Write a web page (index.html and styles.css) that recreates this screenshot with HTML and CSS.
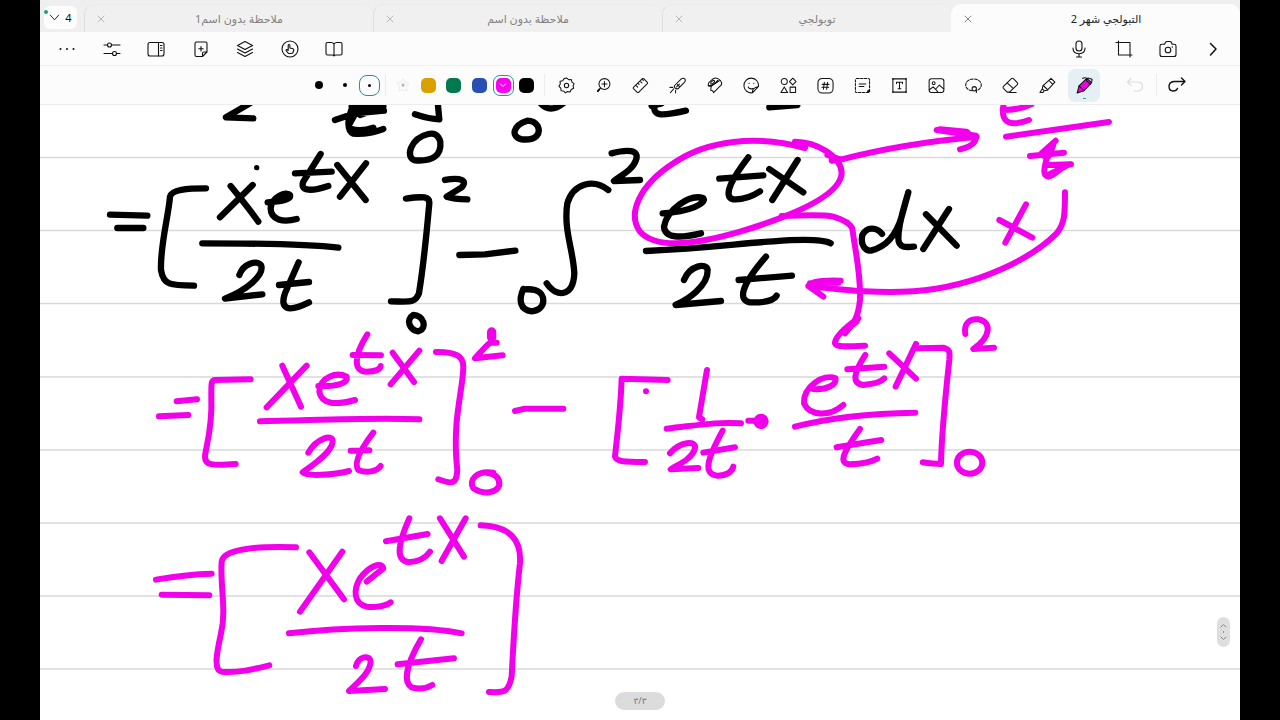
FILE: index.html
```html
<!DOCTYPE html>
<html lang="ar">
<head>
<meta charset="utf-8">
<meta name="viewport" content="width=device-width, initial-scale=1">
<title>التبولجي شهر 2</title>
<link rel="stylesheet" href="styles.css">
</head>
<body>
<div class="app">
  <nav class="tabs" aria-label="Notes">
    <button class="tab-count" type="button"><svg class="chevron" viewBox="0 0 12 12"><path d="M1.500 3.500L6 8.500L10.500 3.500"/></svg><span>4</span></button>
    <div class="tab"><button class="close" type="button" aria-label="Close"><svg viewBox="0 0 8 8"><path d="M1 1L7 7M7 1L1 7"/></svg></button><button class="tab-name" type="button" dir="rtl">ملاحظة بدون اسم1</button></div>
    <div class="tab"><button class="close" type="button" aria-label="Close"><svg viewBox="0 0 8 8"><path d="M1 1L7 7M7 1L1 7"/></svg></button><button class="tab-name" type="button" dir="rtl">ملاحظة بدون اسم</button></div>
    <div class="tab"><button class="close" type="button" aria-label="Close"><svg viewBox="0 0 8 8"><path d="M1 1L7 7M7 1L1 7"/></svg></button><button class="tab-name" type="button" dir="rtl">توبولجي</button></div>
    <div class="tab active"><button class="close" type="button" aria-label="Close"><svg viewBox="0 0 8 8"><path d="M1 1L7 7M7 1L1 7"/></svg></button><button class="tab-name" type="button" dir="rtl">التبولجي شهر 2</button></div>
  </nav>

  <header class="actions">
    <div class="group view-group">
      <button class="icon" type="button" aria-label="More"><svg viewBox="0 0 18 18"><g class="solid"><circle cx="2.500" cy="9" r="1"/><circle cx="9" cy="9" r="1"/><circle cx="15.500" cy="9" r="1"/></g></svg></button>
      <button class="icon" type="button" aria-label="Settings"><svg viewBox="0 0 18 18"><path d="M1 5H4.500M8.500 5H17M1 13.500H9.500M13.500 13.500H17"/><circle cx="6.500" cy="5" r="2"/><circle cx="11.500" cy="13.500" r="2"/></svg></button>
      <button class="icon" type="button" aria-label="Side panel"><svg viewBox="0 0 18 18"><rect x="1" y="2.500" width="16" height="13.500" rx="2"/><path d="M11.500 2.500V16M13.500 5.500H15M13.500 8H15M13.500 10.500H15"/></svg></button>
      <button class="icon" type="button" aria-label="Add page"><svg viewBox="0 0 18 18"><path d="M10.500 16.500H4.500Q3 16.500 3 15V3.500Q3 2 4.500 2H13.500Q15 2 15 3.500V12L10.500 16.500V13.500Q10.500 12 12 12H15M9 6.500V11M6.800 8.700H11.200"/></svg></button>
      <button class="icon" type="button" aria-label="Layers"><svg viewBox="0 0 18 18"><path d="M9 1.500L16.500 5.500L9 9.500L1.500 5.500ZM1.500 9L9 13L16.500 9M1.500 12.500L9 16.500L16.500 12.500"/></svg></button>
      <button class="icon" type="button" aria-label="Touch mode"><svg viewBox="0 0 18 18"><circle cx="9" cy="9" r="8"/><path d="M7.200 10V5.500Q7.300 4.500 8 4.500Q8.900 4.500 8.900 5.500V8L12 8.700Q13 9 12.800 10L12 12.500Q11.500 13.500 10 13.500H8.500Q7.700 13.500 7 12.800L5 10.500Q5 9.200 6.200 9.500L7.200 10.500"/></svg></button>
      <button class="icon" type="button" aria-label="Reading view"><svg viewBox="0 0 18 18"><path d="M9 4Q8 2.500 6 2.500H2.500Q1 2.500 1 4V13.500Q1 15 2.500 15H7Q8.500 15 9 16Q9.500 15 11 15H15.500Q17 15 17 13.500V4Q17 2.500 15.500 2.500H12Q10 2.500 9 4V15.500"/></svg></button>
    </div>
    <div class="group capture-group">
      <button class="icon" type="button" aria-label="Record"><svg viewBox="0 0 18 18"><rect x="6" y="1" width="6" height="10" rx="3"/><path d="M3 8V8.500Q3.200 13.500 9 13.800Q14.800 13.500 15 8.500V8M9 14V17M6.500 17H11.500"/></svg></button>
      <button class="icon" type="button" aria-label="Crop"><svg viewBox="0 0 18 18"><path d="M3.500 1V15H17M1 2.500H15V17" stroke-dasharray="3 .8"/></svg></button>
      <button class="icon" type="button" aria-label="Camera"><svg viewBox="0 0 18 18"><path d="M5.500 4.200L6.500 2.200Q7 1.500 8 1.500H11Q12 1.500 12.300 2.200L13.200 4.200H15Q17 4.200 17 6V14.500Q17 16.500 15 16.500H3Q1 16.500 1 14.500V6Q1 4.200 3 4.200Z"/><circle cx="9" cy="10" r="2.800"/><circle class="solid" cx="13.300" cy="7" r=".7"/></svg></button>
      <button class="icon" type="button" aria-label="Next"><svg viewBox="0 0 18 18"><path stroke-width="1.500" d="M6.500 3.500L12 9L6.500 15"/></svg></button>
    </div>
  </header>

  <div class="pens" role="toolbar" aria-label="Drawing tools">
    <div class="group size-group">
      <button class="icon" type="button" aria-label="Thick"><span class="dot large"></span></button>
      <button class="icon" type="button" aria-label="Medium"><span class="dot medium"></span></button>
      <button class="icon size-on" type="button" aria-label="Thin"><span class="dot"></span></button>
    </div>
    <span class="rule"></span>
    <div class="group colour-group">
      <button class="icon faint" type="button" aria-label="Add colour"><svg viewBox="0 0 18 18"><path class="star" d="M9 3L11 6L15 7L12.500 10.500L13 15L9 13.500L5 15L5.500 10.500L3 7L7 6Z"/><path d="M9 7.500V10.500M7.500 9H10.500"/></svg></button>
      <button class="icon" type="button" aria-label="Gold"><span class="swatch gold"></span></button>
      <button class="icon" type="button" aria-label="Green"><span class="swatch green"></span></button>
      <button class="icon" type="button" aria-label="Blue"><span class="swatch blue"></span></button>
      <button class="icon colour-on" type="button" aria-label="Magenta"><span class="swatch magenta"><svg viewBox="0 0 8 8"><path d="M1.500 3L4 5.500L6.500 3"/></svg></span></button>
      <button class="icon" type="button" aria-label="Black"><span class="swatch black"></span></button>
    </div>
    <span class="rule"></span>
    <div class="group tool-group">
      <button class="icon tool" type="button" aria-label="Tool settings"><svg viewBox="0 0 18 18"><path d="M9 1L11.200 2.800L14 2.600L14.800 5.400L17 7L16 9.300L16.600 12L14 13.200L12.800 15.800L10 15.300L7.800 16.800L6 14.800L3.200 14.500L3 11.700L1 9.800L2.400 7.400L2.200 4.600L5 4L6.500 1.700Z"/><circle cx="9" cy="9" r="2.300"/></svg></button>
      <button class="icon tool" type="button" aria-label="Zoom"><svg viewBox="0 0 18 18"><circle cx="10" cy="7.500" r="5.800"/><path d="M10 4.800V10.200M7.300 7.500H12.700M5.900 11.600L2.800 15.200"/><path stroke-width="2" d="M4.600 13.200L3 15"/></svg></button>
      <button class="icon tool" type="button" aria-label="Ruler"><svg viewBox="0 0 18 18"><path d="M1.500 11L11 1.800Q11.700 1.200 12.400 1.800L16.200 5.600Q16.800 6.300 16.200 7L7 16.200Q6.300 16.800 5.600 16.200L1.500 12.300Q1 11.600 1.500 11ZM4 8.700L6 10.700M6.200 6.500L7.500 7.800M8.500 4.300L10.500 6.300M10.600 2.200L12 3.600"/></svg></button>
      <button class="icon tool" type="button" aria-label="Laser pointer"><svg viewBox="0 0 18 18"><path d="M6 9L13 2Q15 .5 16.700 2Q18 3.600 16.500 5.500L9.500 12.500Q7.500 12.800 6.300 11.500Q5.300 10.300 6 9ZM8 10.500L11 7.500M9 8Q9 9.500 11 9.700"/><path stroke-dasharray="1.500 1" d="M5 12.500L1.500 16.500M4 11H1M7 14V17"/></svg></button>
      <button class="icon tool" type="button" aria-label="Washi tape"><svg viewBox="0 0 18 18"><path d="M3 6L8 1.500Q10 .5 13 2Q16 3.500 16.500 6V8L8 16.500L7 14.500L5 14L5.500 10L2.500 9.500Q2 7.500 3 6ZM3 9Q7 9.500 12.500 3.500M5.500 10L14 4"/><ellipse cx="7" cy="5.500" rx="2.500" ry="1.200" transform="rotate(-38 7 5.500)"/></svg></button>
      <button class="icon tool" type="button" aria-label="Stickers"><svg viewBox="0 0 18 18"><path d="M16.500 10A7.800 7.800 0 1 0 10 16.700L16.500 10ZM10 16.700Q9.800 12.700 12.500 11.500Q14 10.700 16.500 10M5.500 10.500Q7 13.500 10.500 12.200"/><circle class="solid" cx="6.500" cy="6.800" r=".6"/><circle class="solid" cx="11.500" cy="6.800" r=".6"/></svg></button>
      <button class="icon tool" type="button" aria-label="Shapes"><svg viewBox="0 0 18 18"><circle cx="4.500" cy="4.800" r="3.200"/><path d="M13.500 1.300L17 4.800L13.500 8.300L10 4.800ZM4.500 10.500L8 16.500H1Z"/><rect x="10.700" y="10.700" width="5.800" height="5.800"/></svg></button>
      <button class="icon tool" type="button" aria-label="Tags"><svg viewBox="0 0 18 18"><rect x="1" y="1.500" width="16" height="15.500" rx="4.500"/><path d="M7.800 5.500L6.800 13M11.200 5.500L10.200 13M5.500 7.800H12.700M5.200 10.800H12.400"/></svg></button>
      <button class="icon tool" type="button" aria-label="Select text"><svg viewBox="0 0 18 18"><rect stroke-dasharray="2.500 1.500" x="1.500" y="1.500" width="15" height="15" rx="1.500"/><path d="M5.500 7.500H12.500M5.500 10H10.500"/><circle class="solid" cx="15.500" cy="15" r="1.500"/></svg></button>
      <button class="icon tool" type="button" aria-label="Text box"><svg viewBox="0 0 18 18"><rect x="2" y="2" width="14" height="14"/><path d="M5.800 7V5.500H12.200V7M9 5.500V12.500M7.500 12.500H10.500"/><path class="solid" d="M1.300 1.300h1.500v1.500h-1.500zM15.200 1.300h1.500v1.500h-1.500zM1.300 15.200h1.500v1.500h-1.500zM15.200 15.200h1.500v1.500h-1.500z"/></svg></button>
      <button class="icon tool" type="button" aria-label="Image"><svg viewBox="0 0 18 18"><rect x="1.200" y="1.800" width="15.600" height="14.500" rx="2.500"/><circle cx="6" cy="6.500" r="1.500"/><path d="M1.500 13.500L5.500 10.500L8 13L12 8.500L16.500 12.500M8 13L10.500 16"/></svg></button>
      <button class="icon tool" type="button" aria-label="Lasso"><svg viewBox="0 0 18 18"><path stroke-dasharray="3 1.500" d="M7.500 14.500C3 13.800.8 11.500.8 8.500C.8 4.700 4.500 2 9 2S17.200 4.700 17.200 8.500C17.200 11.200 15 13.600 12 14.300"/><circle cx="9.800" cy="12.500" r="2.300"/><path d="M11.500 14Q12.500 15.500 12 16.500"/></svg></button>
      <button class="icon tool" type="button" aria-label="Eraser"><svg viewBox="0 0 18 18"><path d="M1.500 10L10 1.800Q11 1 12 1.800L16.200 6Q17 7 16.200 8L8 16H5.500L1.500 12Q.8 11 1.500 10ZM5.500 6.200L12 12.200M8 16.500H15"/></svg></button>
      <button class="icon tool" type="button" aria-label="Highlighter"><svg viewBox="0 0 18 18"><path d="M4 9.500L12.800 1.500L16.800 5.500L9 14L5.500 14.500L3.500 12.500ZM3.500 12.500L1 16.500H4L5.500 14.500M4.500 9L9.200 13.500M10.500 3.700L14.600 7.800"/></svg></button>
      <button class="icon tool tool-on" type="button" aria-label="Pen"><svg viewBox="0 0 18 18"><path class="ink-fill" d="M3.200 9.500L11.500 1.500L16.500 6L8.500 14.500L1.200 17Z"/><path d="M10 2.800L15.200 7.500M3.200 9.500L8.500 14.500M7 1.500Q9 0 11.500 1.500M12.500 1L17 2.500L16.500 6"/></svg><span class="tick"></span></button>
    </div>
    <div class="group history-group">
      <button class="icon undo" type="button" aria-label="Undo" disabled><svg viewBox="0 0 18 18"><path d="M5 2.500L1.500 6L5 9.500M1.500 6H12Q16.500 6.500 16.500 10.500T12 15H8"/></svg></button>
      <span class="rule"></span>
      <button class="icon" type="button" aria-label="Redo"><svg viewBox="0 0 18 18"><path stroke-width="1.400" d="M13.500 2L17 5.500L13.500 9M17 5.500H6Q1 6 1 10.500Q1.200 15 5 15Q8.500 15 9.500 12.500"/></svg></button>
    </div>
  </div>

  <main class="page">
    <svg class="sheet" viewBox="40 105 1200 615" preserveAspectRatio="xMinYMin slice" role="img" aria-label="Handwritten integration by parts">
      <path class="ruling" d="M40 157.500H1240M40 230.500H1240M40 303.500H1240M40 377H1240M40 450H1240M40 523H1240M40 596H1240M40 669H1240"/>
      <!-- first term, black ink -->
      <g class="ink black-ink" transform="translate(100 100) scale(.3333)">
        <path d="M450 10L378 52L460 55"/>
        <path d="M765 5C742 50 738 90 760 101C800 104 825 95 850 87M705 60L765 40L852 32M750 85C775 95 800 90 820 83M780 15L750 70M820 10L780 45L850 20M755 20L850 15"/>
        <path d="M1013 5L1018 58Q990 58 945 43"/>
        <path d="M985 102C930 115 915 175 945 181C1000 185 1025 165 1021 125C1015 103 1000 98 985 102Z"/>
        <path d="M470 203h.1" stroke-width="16"/>
        <path d="M392 258C410 280 450 330 475 365M458 255L360 352"/>
        <path d="M503 307C540 305 575 300 570 285C560 272 515 290 512 325C512 360 550 368 590 357"/>
        <path d="M662 162L610 245C600 270 625 278 685 258M585 220L695 215"/>
        <path d="M712 195L797 300M798 190L720 290"/>
        <path d="M307 430C450 430 620 432 715 443"/>
        <path d="M418 525C430 490 470 480 483 495C495 525 440 570 375 596L487 583"/>
        <path d="M596 487L555 580C540 625 560 640 627 607M537 555L627 546"/>
        <path d="M318 265C260 265 215 268 210 290C205 350 180 440 183 510C190 555 210 557 282 557"/>
        <path d="M30 344L142 347M52 384H130"/>
        <path d="M918 296C970 288 990 290 988 310C980 400 970 500 957 580C945 610 930 605 873 604"/>
        <path d="M940 645C915 660 930 690 955 694C985 685 970 645 940 645Z"/>
      </g>
      <!-- second term, black ink -->
      <g class="ink black-ink" transform="translate(440 100) scale(.3333)">
        <path d="M262 62C220 75 210 110 245 118C290 122 303 100 293 78C285 65 270 62 262 62ZM300 8C320 32 345 30 370 10"/>
        <path d="M645 8C635 50 660 50 738 32M635 18L665 10M988 22L1072 15"/>
        <path d="M15 240C60 232 85 240 65 262L20 290Q40 297 82 298"/>
        <path d="M58 465L135 463L226 452"/>
        <path d="M505 270C460 235 400 250 382 310C370 390 400 450 403 520C400 590 350 595 320 550"/>
        <path d="M515 160C560 148 600 148 588 180C578 210 545 225 522 243L600 240"/>
        <path d="M250 567C235 600 240 630 275 634C320 630 320 580 285 570C265 565 255 570 250 567"/>
        <path d="M668 340C750 335 800 310 790 295C750 280 680 330 672 380C675 415 720 415 783 400"/>
        <path d="M925 172C880 230 845 290 880 298C910 300 935 290 960 274M838 236L970 226"/>
        <path d="M988 207L1090 277M1073 180L997 300"/>
        <path d="M618 453C800 445 900 430 1000 424C1080 418 1150 418 1172 430"/>
        <path d="M732 540C750 495 800 488 803 510C805 560 740 600 707 615L843 603"/>
        <path d="M978 470C900 560 895 600 930 607C960 608 1000 605 1010 587M896 540L1056 527"/>
      </g>
      <g class="ink black-ink" transform="translate(780 100) scale(.3333)">
        <path d="M306 402C290 380 260 380 247 405C240 440 260 455 275 451C320 440 350 400 365 350L385 277C370 330 355 370 355 415C355 445 380 442 402 440M438 343L530 437M507 327L430 447"/>
      </g>
      <!-- circled exponential with its arrows -->
      <g class="ink pink-ink" transform="translate(780 100) scale(.3333)">
        <path d="M75 144C-70 104 -220 120 -320 190C-420 255 -460 340 -420 395C-370 450 -240 430 -120 395C30 350 180 290 185 220C185 170 110 125 45 125L75 140M142 165L180 178"/>
        <path d="M5 348C80 345 140 345 160 350C200 362 212 375 217 385C225 450 243 520 240 600C235 650 220 675 195 700M235 655C200 680 165 710 165 730C170 742 200 740 255 737M230 665L192 695"/>
        <path d="M155 182L185 178C300 148 430 125 590 110M470 90L588 107C590 130 565 142 540 148M480 88L560 95L580 115"/>
        <path d="M672 8C660 60 680 85 747 60M668 30C700 30 730 25 755 12M678 110L987 66"/>
        <path d="M827 122L785 160L800 175C795 200 785 225 805 230C830 225 845 195 873 193L805 195M750 168L852 158M820 135L805 170M810 222L855 200"/>
        <path d="M658 360L757 413M738 313L676 428"/>
        <path d="M855 277C855 340 855 370 830 400C760 470 600 560 400 574C280 580 200 570 85 558M182 542C130 540 90 545 85 558L130 590M90 550L175 548M100 565L125 560"/>
        <path d="M556 702C550 670 570 655 595 658C635 665 635 710 580 747L642 743"/>
      </g>
      <!-- second line of working -->
      <g class="ink pink-ink" transform="translate(140 320) scale(.3333)">
        <path d="M57 289L145 285M110 244L171 238"/>
        <path d="M332 178L225 180C213 182 214 190 214 230C218 330 195 390 195 410C195 435 215 438 287 432"/>
        <path d="M427 137L483 260M500 137L380 262"/>
        <path d="M535 198C590 200 625 190 620 170C590 155 540 170 538 215C545 255 590 255 645 240"/>
        <path d="M682 43C640 110 640 155 680 155C700 155 720 150 722 138M638 105L723 106"/>
        <path d="M758 98L822 186M838 92L752 193M360 304C550 300 700 292 838 298"/>
        <path d="M505 398C530 355 580 340 578 365C575 400 510 440 488 457C500 470 580 465 627 453"/>
        <path d="M700 338C660 390 640 430 655 450C680 460 710 455 722 438M632 392L688 391"/>
        <path d="M888 96C950 95 970 110 970 140C970 210 935 300 952 450C950 490 940 495 895 478"/>
        <path d="M1055 36V52" stroke-width="28"/><path d="M1070 68H1050C1030 85 1015 105 1005 115L1088 106"/>
        <path d="M1060 458C1010 450 985 480 1000 505C1030 525 1070 520 1078 495C1080 470 1060 460 1040 458"/>
      </g>
      <g class="ink pink-ink" transform="translate(500 310) scale(.3333)">
        <path d="M45 303L75 296H190"/>
        <path d="M503 210L365 206C362 300 350 390 345 440C350 455 370 456 435 456M438 244h.1"/>
        <path d="M621 180L597 322L607 328M500 356C600 345 650 335 723 340"/>
        <path d="M510 430C540 395 590 390 585 415C575 450 530 465 512 478L595 474"/>
        <path d="M668 362C620 450 610 490 650 497C680 498 697 485 700 470M610 428L705 412"/>
        <path d="M745 332H780"/><path d="M783 334h.1" stroke-width="46"/>
        <path d="M940 237C980 240 1010 225 1007 205C970 190 910 230 912 280C930 320 990 320 1030 285"/>
        <path d="M1096 135C1060 190 1055 220 1090 225C1120 222 1145 215 1153 205M1042 178L1153 170"/>
        <path d="M1168 130L1248 206M1248 102L1187 230M885 350C1000 320 1120 310 1246 308"/>
        <path d="M1080 357C1020 440 1020 460 1050 463C1080 462 1110 458 1132 446M1010 412L1144 390"/>
        <path d="M1255 115L1330 113C1350 118 1350 125 1348 150C1335 270 1325 370 1323 462Q1300 462 1268 457"/>
        <ellipse cx="1409" cy="458" rx="38" ry="33"/>
      </g>
      <!-- third line of working -->
      <g class="ink pink-ink" transform="translate(140 500) scale(.3333)">
        <path d="M48 239C100 230 160 222 215 221M65 284L208 286"/>
        <path d="M468 142C360 138 250 145 245 185C240 260 260 330 243 400C230 460 220 510 245 515C290 520 340 508 388 496"/>
        <path d="M508 157L612 298M607 155L480 335"/>
        <path d="M680 245L730 205C725 185 690 195 660 235C640 270 640 310 680 320C710 323 740 318 752 307"/>
        <path d="M808 55C775 130 765 180 805 187C840 185 860 170 870 155M738 124L863 102"/>
        <path d="M900 55L972 170M977 55L905 183M447 400C600 382 850 375 965 400"/>
        <path d="M648 498C655 470 690 462 692 485C690 520 650 550 627 573L735 567"/>
        <path d="M843 418C790 510 795 550 815 562C840 570 860 565 877 555M773 493L942 475"/>
        <path d="M1022 76C1110 78 1145 120 1140 190C1125 320 1120 440 1115 530C1105 580 1090 578 1047 576"/>
      </g>
    </svg>
    <button class="scroller" type="button" aria-label="Scroll"><svg viewBox="0 0 13 30"><path d="M4 10L6.500 7.500L9 10M4 20L6.500 22.500L9 20M6.500 14.500V15.500"/></svg></button>
    <span class="page-number" dir="rtl">٣/٣</span>
  </main>
</div>
</body>
</html>
```
FILE: styles.css
```css
* { box-sizing: border-box; }

body {
  margin: 0;
  background: #000;
  color: #111;
  font-family: "Noto Sans", "DejaVu Sans", sans-serif;
}

button {
  margin: 0;
  padding: 0;
  border: 0;
  background: none;
  color: inherit;
  font: inherit;
}

svg {
  display: block;
  fill: none;
  stroke: currentColor;
  stroke-linecap: round;
  stroke-linejoin: round;
}

.app {
  display: flex;
  flex-direction: column;
  height: 100vh;
  margin: 0 40px;
  background: #fcfcfc;
}

/* Note tabs */
.tabs {
  display: flex;
  align-items: stretch;
  height: 32px;
  padding-top: 4px;
  background: #efefef;
}

.tab-count {
  position: relative;
  display: flex;
  align-items: center;
  justify-content: center;
  gap: 5px;
  width: 33px;
  height: 23px;
  margin: 2px 7px 0 4px;
  border-radius: 6px;
  background: #fdfdfd;
  font-size: 11px;
}

.tab-count::before {
  content: "";
  position: absolute;
  top: 4px;
  left: 0;
  width: 4px;
  height: 4px;
  border-radius: 50%;
  background: #18a566;
}

.chevron { width: 11px; height: 11px; }

.tab {
  display: flex;
  flex: 1;
  align-items: center;
  padding-left: 12px;
  border-left: 1px solid #dedede;
  border-top: 1px solid #ebebeb;
  border-radius: 10px 10px 0 0;
  background: #f0f0f0;
  color: #808080;
}

.tab.active {
  border-color: #fcfcfc;
  background: #fcfcfc;
  color: #222;
}

.close { padding: 0; color: #b8b8b8; }
.close svg { width: 8px; height: 8px; }
.active .close { color: #888; }

.tab-name {
  flex: 1;
  font-size: 11px;
  line-height: 16px;
}

/* Shared icon rows */
.group {
  display: flex;
  align-items: center;
  justify-content: space-between;
}

.icon {
  display: flex;
  align-items: center;
  justify-content: center;
  width: 24px;
  height: 24px;
}

.icon > svg { width: 18px; height: 18px; stroke-width: 1.1; }
.solid { fill: currentColor; stroke: none; }

.actions {
  display: flex;
  align-items: center;
  justify-content: space-between;
  height: 34px;
  padding: 0 15px;
  border-bottom: 1px solid #f0f0f0;
}

.view-group { width: 291px; }
.capture-group { width: 158px; }

.pens {
  display: flex;
  align-items: center;
  justify-content: flex-end;
  height: 39px;
  padding-right: 51px;
  border-bottom: 1px solid #ededed;
}

.rule {
  flex: none;
  width: 1px;
  height: 22px;
  margin: 0 5px;
  background: #ececec;
}

.size-group { width: 73px; }
.colour-group { width: 148px; }
.tool-group { width: 550px; }

.dot {
  width: 3px;
  height: 3px;
  border-radius: 50%;
  background: #000;
}

.dot.medium { width: 4px; height: 4px; }
.dot.large { width: 8px; height: 8px; }

.size-on::before { content: none; }
.size-on {
  width: 21px;
  height: 21px;
  border: 1px solid #2a8ba3;
  border-radius: 8px;
}

.faint { color: #aaa; }
.star { stroke: #ededed; }

.swatch {
  display: flex;
  align-items: center;
  justify-content: center;
  width: 15px;
  height: 15px;
  border-radius: 5px;
}

.gold { background: #d9a000; }
.green { background: #007850; }
.blue { background: #2850b4; }
.magenta { background: #fa00f0; color: #fff; }
.black { background: #000; }
.swatch svg { width: 8px; height: 8px; }

.colour-on {
  width: 21px;
  height: 21px;
  border: 1px solid #2a8ba3;
  border-radius: 7px;
}

.tool {
  position: relative;
  width: 32px;
  height: 33px;
}

.tool > svg { width: 17px; height: 17px; }
.tool-on { border-radius: 7px; background: #e5f0f4; }
.ink-fill { fill: #f000e6; }

.tick {
  position: absolute;
  bottom: 3px;
  left: 15px;
  width: 3px;
  height: 1px;
  background: #2a9bb5;
}

.history-group { width: 66px; margin-left: 23px; }
.undo { color: #dcdcdc; }

/* Ruled page */
.page {
  position: relative;
  flex: 1;
  min-height: 0;
  overflow: hidden;
  background: #fff;
}

.sheet { width: 100%; height: 100%; }
.ruling { stroke: #d9d9d9; stroke-width: 1.500; }
.ink { stroke-width: 19; }
.black-ink { stroke: #000; }
.pink-ink { stroke: #f200ec; stroke-width: 18; }

.scroller {
  position: absolute;
  right: 10px;
  bottom: 73px;
  width: 13px;
  height: 30px;
  border-radius: 7px;
  background: #dedede;
  color: #888;
}

.page-number {
  position: absolute;
  bottom: 10px;
  left: 50%;
  width: 50px;
  margin-left: -25px;
  border-radius: 9px;
  background: #dcdcdc;
  color: #777;
  font-size: 9px;
  line-height: 18px;
  text-align: center;
}
```
